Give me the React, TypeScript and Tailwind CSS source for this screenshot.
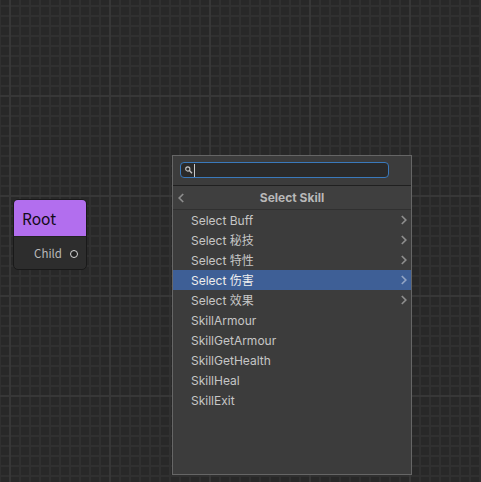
const items = [
  { label: 'Select Buff', group: true },
  { label: 'Select 秘技', group: true },
  { label: 'Select 特性', group: true },
  { label: 'Select 伤害', group: true, active: true },
  { label: 'Select 效果', group: true },
  { label: 'SkillArmour' },
  { label: 'SkillGetArmour' },
  { label: 'SkillGetHealth' },
  { label: 'SkillHeal' },
  { label: 'SkillExit' },
];

function Grid() {
  return (
    <svg className="absolute inset-0 h-full w-full" shapeRendering="crispEdges">
      <defs>
        <pattern id="minor" x="9" y="5" width="10" height="10" patternUnits="userSpaceOnUse">
          <path d="M0 0h10v2H0zM0 2h2v8H0z" fill="#303030" />
        </pattern>
        <pattern id="major" x="9" y="95" width="100" height="100" patternUnits="userSpaceOnUse">
          <path d="M0 0h100v2H0zM0 2h2v98H0z" fill="#373737" />
        </pattern>
      </defs>
      <rect width="100%" height="100%" fill="url(#minor)" />
      <rect width="100%" height="100%" fill="url(#major)" />
    </svg>
  );
}

function RootNode() {
  return (
    <div className="absolute top-[199px] left-[13px] flex h-[71px] w-[74px] flex-col overflow-hidden rounded-[5px] border border-[#191919] bg-[#2d2d2d]/90 font-['Noto_Sans_CJK_SC',sans-serif]">
      <div className="flex h-[37px] shrink-0 items-center border-b border-[#232323] bg-[#b26eee] pl-2 text-[15.5px] leading-9 text-[#120b18]">
        Root
      </div>
      <div className="flex flex-1 items-center justify-end gap-2 pt-px pr-2 text-[11.5px] leading-none text-[#b9b9b9]">
        <span className="pt-px">Child</span>
        <span className="h-2 w-2 rounded-full border border-[#d8d8d8] bg-[#212121]" />
      </div>
    </div>
  );
}

function SearchMenu() {
  return (
    <div className="absolute top-[155px] left-[172px] flex h-[320px] w-[240px] flex-col border border-[#666] bg-[#3c3c3c] font-['Inter','Noto_Sans_CJK_SC',sans-serif] text-[12px] text-[#c6c6c6]">
      <div className="flex h-[30px] shrink-0 border-b border-[#202020] pt-[6px] pl-[7px]">
        <div className="flex h-4 w-[209px] items-center rounded-[4px] border border-[#3a79bb] bg-[#2a2a2a] pl-1">
          <svg width="8" height="8" viewBox="0 0 8 8" fill="none" stroke="#c4c4c4">
            <circle cx="2.8" cy="3" r="2.1" strokeWidth="1.1" />
            <path d="M4.4 4.6L7 7.2" strokeWidth="1.4" />
          </svg>
          <span className="ml-[1px] h-[13px] w-px bg-[#c9c9c9]" />
        </div>
      </div>
      <div className="flex h-6 shrink-0 items-center border-b border-[#303030] bg-[#3f3f3f] pr-[5px] pl-[5px]">
        <svg width="6" height="10" viewBox="0 0 6 10" fill="none" stroke="#8d8d8d" strokeWidth="1.7">
          <path d="M5.2 1L1.2 5L5.2 9" />
        </svg>
        <span className="flex-1 pr-[6px] text-center text-[12px] font-bold text-[#b8b8b8]">Select Skill</span>
      </div>
      <ul>
        {items.map((item) => (
          <li
            key={item.label}
            className={`flex h-5 items-center justify-between pr-1 pl-[18px] leading-5 ${item.active ? 'bg-[#3e5f96] text-[#eeeeee]' : ''}`}
          >
            <span className="pt-0.5 whitespace-nowrap">{item.label}</span>
            {item.group && (
              <svg
                width="6"
                height="10"
                viewBox="0 0 6 10"
                fill="none"
                stroke={item.active ? '#91a4c4' : '#8d8d8d'}
                strokeWidth="1.7"
              >
                <path d="M0.8 1L4.8 5L0.8 9" />
              </svg>
            )}
          </li>
        ))}
      </ul>
    </div>
  );
}

export default function App() {
  return (
    <div className="relative h-[482px] w-full overflow-hidden bg-[#282828]">
      <Grid />
      <RootNode />
      <SearchMenu />
    </div>
  );
}
